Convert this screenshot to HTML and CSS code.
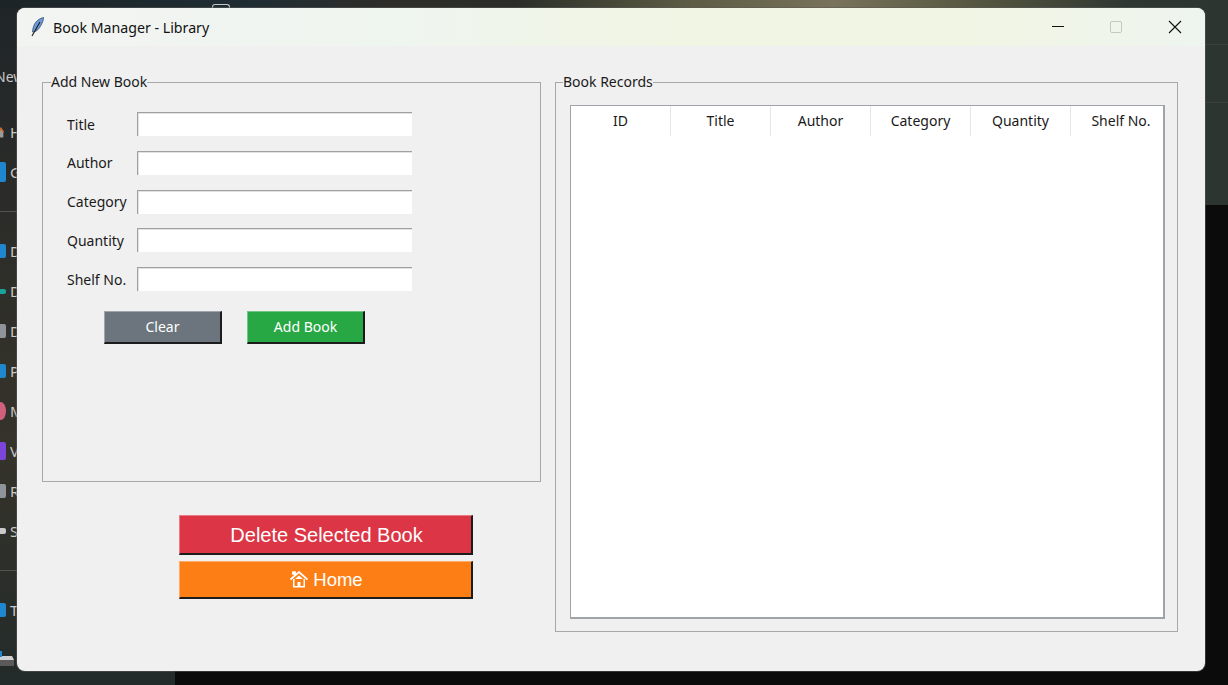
FILE: index.html
```html
<!DOCTYPE html>
<html lang="en">
<head>
<meta charset="utf-8">
<title>Book Manager - Library</title>
<link rel="stylesheet" href="styles.css">
</head>
<body>
<div class="desktop">
  <div class="topstrip"><span class="tab-shape"></span></div>
  <aside class="sidebar">
    <div class="side-row side-new">New</div>
    <div class="side-row">
      <svg class="ico" width="10" height="18" viewBox="0 0 10 18"><path d="M0 9 5 3l4 6H8v7H0z" fill="#9a9a9a"/><path d="M0 9 5 3l4 6-1 1-3-4-5 6z" fill="#d5601f"/></svg>H
    </div>
    <div class="side-row"><i class="ico i-blue i-tall"></i>G</div>
    <div class="side-div"></div>
    <div class="side-row"><i class="ico i-blue"></i>D</div>
    <div class="side-row"><i class="ico i-teal"></i>D</div>
    <div class="side-row"><i class="ico i-gray"></i>D</div>
    <div class="side-row"><i class="ico i-blue"></i>P</div>
    <div class="side-row"><i class="ico i-pink"></i>M</div>
    <div class="side-row"><i class="ico i-purple"></i>V</div>
    <div class="side-row"><i class="ico i-gray"></i>R</div>
    <div class="side-row"><i class="ico i-small"></i>S</div>
    <div class="side-div"></div>
    <div class="side-row"><i class="ico i-blue"></i>T</div>
    <div class="side-row">
      <svg class="drive" width="18" height="20" viewBox="0 0 18 20"><path d="M4 8h12l2 4v6H4z" fill="#5a5a5a"/><path d="M4 8h12l2 4H4z" fill="#cfcfd3"/><rect x="4" y="3" width="2" height="6" fill="#1f86d0"/></svg>
    </div>
  </aside>

  <main class="window">
    <header class="titlebar">
      <svg class="feather" width="16" height="20" viewBox="0 0 16 20">
        <path d="M14.500 .500C8 2 4 7 3.500 15c3 0 6-2 8-6 2-3 3-6 3-8.500z" fill="#6a9bd8" stroke="#2c3f5c" stroke-width=".7"/>
        <path d="M11 5 3 19" stroke="#1a1a1a" stroke-width="1.100" fill="none"/>
      </svg>
      <span class="title-text">Book Manager - Library</span>
      <div class="controls">
        <svg class="ctl" width="46" height="38" viewBox="0 0 46 38"><path d="M15 18.500h12" stroke="#111" stroke-width="1"/></svg>
        <svg class="ctl" width="46" height="38" viewBox="0 0 46 38"><rect x="15.500" y="13.500" width="11" height="11" rx="1.500" fill="none" stroke="#c4c7c2"/></svg>
        <svg class="ctl" width="46" height="38" viewBox="0 0 46 38"><path d="M16 13l12 12M28 13 16 25" stroke="#111" stroke-width="1.100"/></svg>
      </div>
    </header>

    <div class="content">
      <section class="left-col">
        <fieldset class="group add-group">
          <legend>Add New Book</legend>
          <div class="form-row"><label>Title</label><input class="entry" type="text"></div>
          <div class="form-row"><label>Author</label><input class="entry" type="text"></div>
          <div class="form-row"><label>Category</label><input class="entry" type="text"></div>
          <div class="form-row"><label>Quantity</label><input class="entry" type="text"></div>
          <div class="form-row"><label>Shelf No.</label><input class="entry" type="text"></div>
          <div class="form-actions">
            <button class="btn small gray">Clear</button>
            <button class="btn small green">Add Book</button>
          </div>
        </fieldset>
        <div class="big-actions">
          <button class="btn big red">Delete Selected Book</button>
          <button class="btn big orange home">
            <svg width="18" height="17" viewBox="0 0 18 17"><path d="M3 3V1h2v2zM.5 8.500 9 1l8.500 7.500" fill="none" stroke="#fff" stroke-width="1.700"/><path d="M3 8h12v8.500H3zM4.500 15h3v-4h3v4h3V8.500L9 4.500l-4.500 4z" fill="#fff" fill-rule="evenodd"/></svg>
            Home
          </button>
        </div>
      </section>

      <fieldset class="group records">
        <legend>Book Records</legend>
        <div class="table">
          <div class="thead">
            <div class="th">ID</div>
            <div class="th">Title</div>
            <div class="th">Author</div>
            <div class="th">Category</div>
            <div class="th">Quantity</div>
            <div class="th last">Shelf No.</div>
          </div>
        </div>
      </fieldset>
    </div>
  </main>
</div>
</body>
</html>
```

FILE: styles.css
```css
* { box-sizing: border-box; }
html, body { margin: 0; padding: 0; height: 100%; overflow: hidden; }
body { font-family: "Noto Sans", "Open Sans", sans-serif; }

.desktop {
  position: relative;
  width: 1228px;
  height: 685px;
  overflow: hidden;
  background:
    linear-gradient(180deg, #1f2528 0, #2b2c29 200px, #35332a 450px, #232b2a 100%) left / 175px 100% no-repeat,
    linear-gradient(180deg, #2c3530 0, #2c3530 44px, #3a3f3b 44px, #3a3f3b 45px, #2c3530 45px, #2c3530 102px, #3a3f3b 102px, #3a3f3b 103px, #2c3530 103px, #2c3530 205px, #0b0b0b 205px);
}

.topstrip {
  height: 8px;
  padding: 4px 0 0 212px;
  background: linear-gradient(90deg, #1c2427 0, #1f2d33 20%, #2e2d29 32%, #2a2e28 42%, #5d5b44 56%, #78735a 68%, #54553f 80%, #2e3731 92%, #2c3530 100%);
}
.tab-shape {
  display: block;
  width: 18px;
  height: 4px;
  border: 1px solid #c4c4c4;
  border-bottom: 0;
  border-radius: 3px 3px 0 0;
}

.sidebar {
  position: absolute;
  left: 0;
  top: 56px;
  width: 40px;
  color: #c9c9c9;
  font-size: 15px;
}
.side-row {
  display: flex;
  align-items: center;
  height: 40px;
  gap: 4px;
  margin-left: -4px;
}
.side-new { margin-left: -5px; margin-bottom: 16px; font-size: 14px; }
.side-div { height: 1px; margin: 19px 0 19px; background: #55544c; }
.ico { display: block; width: 10px; height: 14px; flex: none; border-radius: 2px; }
.i-tall { height: 20px; }
.i-blue { background: #1f86d0; }
.i-teal { background: #1aa39a; height: 5px; }
.i-gray { background: #8e949a; }
.i-pink { background: #d0607e; border-radius: 50%; height: 18px; }
.i-purple { background: #7a45d8; height: 18px; }
.i-small { background: #c9c9c9; height: 6px; }
.drive { display: block; flex: none; margin-top: 16px; }

.window {
  position: absolute;
  left: 17px;
  top: 8px;
  width: 1188px;
  height: 663px;
  background: #f0f0f0;
  border-radius: 8px;
  overflow: hidden;
  display: flex;
  flex-direction: column;
  box-shadow: 0 0 0 1px rgba(90, 90, 90, .55);
}

.titlebar {
  height: 38px;
  flex: none;
  display: flex;
  align-items: center;
  padding-left: 12px;
  background: linear-gradient(90deg, #f2f4f2 0, #eff5ef 33%, #f1f5e4 55%, #f1f5e4 80%, #eef5ef 100%);
  color: #111;
  font-size: 14.200px;
}
.feather { flex: none; }
.title-text { margin-left: 8px; font-family: "Noto Sans", sans-serif; }
.controls { margin-left: auto; margin-right: 6px; display: flex; }
.ctl { display: block; }
.ctl + .ctl { margin-left: 12px; }

.content {
  flex: 1;
  display: flex;
  align-items: flex-start;
  padding: 28px 27px 0 25px;
  gap: 14px;
}

.group {
  margin: 0;
  border: 1px solid #a8a8a8;
  color: #1a1a1a;
  font-size: 14px;
  min-width: 0;
}
.group legend {
  padding: 0;
  line-height: 16px;
  height: 16px;
}
.add-group legend { margin-left: -16px; }
.records legend { margin-left: -7px; }

.left-col { width: 499px; flex: none; }

.add-group {
  height: 408px;
  padding: 22px 0 0 24px;
}
.form-row {
  display: flex;
  align-items: center;
  height: 24px;
  margin-bottom: 14.750px;
}
.form-row label { width: 70px; flex: none; font-size: 14px; }
.entry {
  width: 275px;
  height: 24px;
  border: 0;
  border-top: 1px solid #a0a0a0;
  border-left: 1px solid #a0a0a0;
  box-shadow: inset 1px 1px 0 #e2e2e2;
  background: #fff;
  padding: 0;
  outline: none;
}
.form-actions {
  display: flex;
  gap: 25px;
  padding: 5px 0 0 37px;
}

.btn {
  border: 1px solid transparent;
  border-top-color: rgba(255, 255, 255, .35);
  border-left-color: rgba(255, 255, 255, .35);
  border-right: 2px solid #1c1c1c;
  border-bottom: 2px solid #1c1c1c;
  padding: 0;
  color: #fff;
  cursor: pointer;
}
.small { width: 118px; height: 33px; font: 14px "Noto Sans", sans-serif; }
.gray { background: #6c757d; }
.green { background: #28a745; }

.big-actions {
  display: flex;
  flex-direction: column;
  gap: 6px;
  width: 294px;
  margin: 33px 0 0 137px;
}
.big { width: 294px; padding-left: 2px; font: 20px "Liberation Sans", Arial, sans-serif; }
.red { background: #dc3545; height: 40px; padding-top: 2px; }
.orange { background: #fd7e14; height: 38px; font-size: 18.500px; }
.home { display: flex; align-items: center; justify-content: center; gap: 5px; }

.records {
  width: 623px;
  height: 558px;
  padding: 15px 12px 13px 14px;
  flex: none;
}
.table {
  height: 514px;
  background: #fff;
  border-style: solid;
  border-width: 1px 2px 2px 1px;
  border-color: #a0a4a8;
}
.thead { display: flex; height: 30px; }
.th {
  width: 100px;
  flex: none;
  display: flex;
  align-items: flex-start;
  justify-content: center;
  padding-top: 5px;
  font-size: 14px;
  line-height: 20px;
  border-right: 1px solid #e6e6e6;
  color: #1a1a1a;
}
.th.last { border-right: 0; width: 94px; padding-left: 6px; }
```
